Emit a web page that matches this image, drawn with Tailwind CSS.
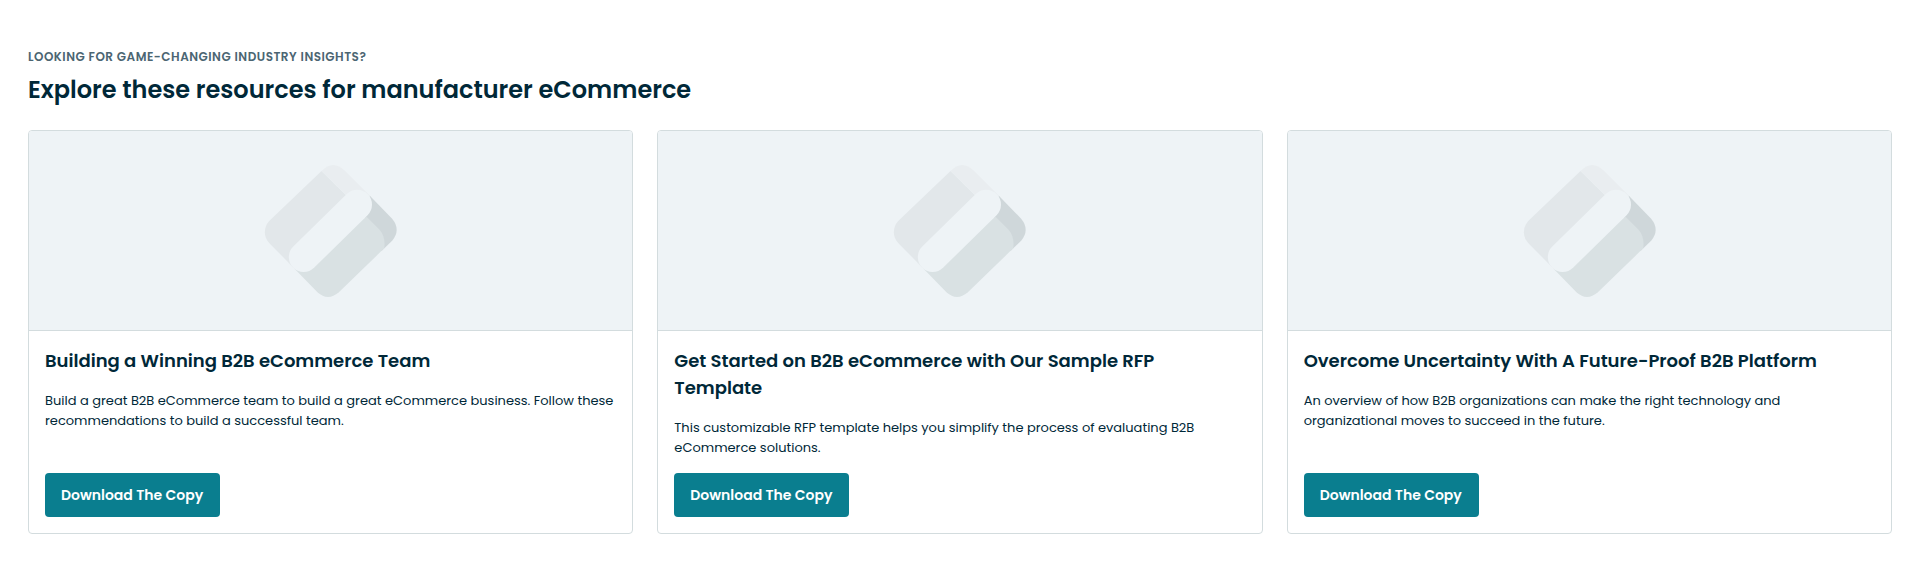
<!DOCTYPE html>
<html lang="en">
<head>
<meta charset="utf-8">
<title>Resources for manufacturer eCommerce</title>
<script src="https://cdn.jsdelivr.net/npm/@tailwindcss/browser@4"></script>
</head>
<body class="bg-white text-[#002838] font-['Poppins','Inter',sans-serif] antialiased">
<svg class="hidden">
  <symbol id="placeholder" viewBox="69.5 69 405 405">
    <path fill="#e2e7ea" d="M245 93 L88 243 Q75 258 75 277 Q75 295 88 309 L165 387 L350 200 L318 165Z"/>
    <path fill="#e9edf0" d="M245 93 Q280 57 316 93 L395 172 L352 194 L318 165Z"/>
    <path fill="#cfd7da" d="M390 167 L457 236 Q484 269 457 302 L425 333 L375 235Z"/>
    <path fill="#d9e1e3" d="M165 387 L233 457 Q264 485 297 457 L433 325 Q438 292 420 270 L380 230 L200 350Z"/>
    <path fill="none" stroke="#eef3f6" stroke-width="89" stroke-linecap="round" d="M191.500 351.500 L352 194"/>
  </symbol>
</svg>
<section class="px-7 pt-12">
  <p class="h-[18px] text-[12px] leading-[18px] font-semibold tracking-[0.5px] text-[#4b6572]">LOOKING FOR GAME-CHANGING INDUSTRY INSIGHTS?</p>
  <h2 class="mt-1.5 h-9 text-[24px] leading-9 font-semibold">Explore these resources for manufacturer eCommerce</h2>
  <div class="mt-[22px] grid h-[404px] grid-cols-3 gap-6">
    <article class="flex flex-col overflow-hidden rounded border border-[#d3dcde]">
      <div class="flex h-[200px] shrink-0 items-center justify-center border-b border-[#d3dcde] bg-[#eef3f6]">
        <svg class="size-[135px]"><use href="#placeholder"/></svg>
      </div>
      <div class="flex grow flex-col items-start p-4">
        <h3 class="text-[18px] leading-[27px] font-semibold">Building a Winning B2B eCommerce Team</h3>
        <p class="mt-[17px] text-[13px] leading-5">Build a great B2B eCommerce team to build a great eCommerce business. Follow these<br>recommendations to build a successful team.</p>
        <a class="mt-auto flex h-11 w-[175px] items-center rounded bg-[#0a7e8f] px-4 text-[14px] font-semibold whitespace-nowrap text-white">Download The Copy</a>
      </div>
    </article>
    <article class="flex flex-col overflow-hidden rounded border border-[#d3dcde]">
      <div class="flex h-[200px] shrink-0 items-center justify-center border-b border-[#d3dcde] bg-[#eef3f6]">
        <svg class="size-[135px]"><use href="#placeholder"/></svg>
      </div>
      <div class="flex grow flex-col items-start p-4">
        <h3 class="text-[18px] leading-[27px] font-semibold">Get Started on B2B eCommerce with Our Sample RFP<br>Template</h3>
        <p class="mt-[17px] text-[13px] leading-5">This customizable RFP template helps you simplify the process of evaluating B2B<br>eCommerce solutions.</p>
        <a class="mt-auto flex h-11 w-[175px] items-center rounded bg-[#0a7e8f] px-4 text-[14px] font-semibold whitespace-nowrap text-white">Download The Copy</a>
      </div>
    </article>
    <article class="flex flex-col overflow-hidden rounded border border-[#d3dcde]">
      <div class="flex h-[200px] shrink-0 items-center justify-center border-b border-[#d3dcde] bg-[#eef3f6]">
        <svg class="size-[135px]"><use href="#placeholder"/></svg>
      </div>
      <div class="flex grow flex-col items-start p-4">
        <h3 class="text-[18px] leading-[27px] font-semibold">Overcome Uncertainty With A Future-Proof B2B Platform</h3>
        <p class="mt-[17px] text-[13px] leading-5">An overview of how B2B organizations can make the right technology and<br>organizational moves to succeed in the future.</p>
        <a class="mt-auto flex h-11 w-[175px] items-center rounded bg-[#0a7e8f] px-4 text-[14px] font-semibold whitespace-nowrap text-white">Download The Copy</a>
      </div>
    </article>
  </div>
</section>
</body>
</html>
